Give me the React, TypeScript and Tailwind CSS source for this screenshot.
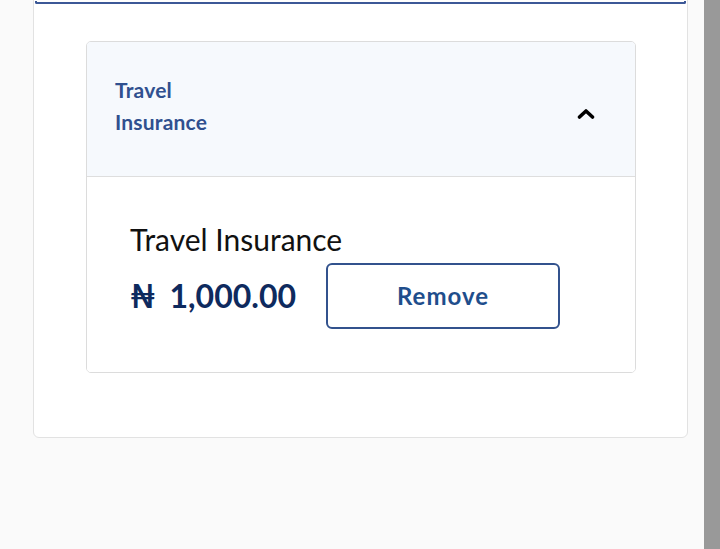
import React from "react";

export default function App() {
  return (
    <div
      className="flex w-[720px] h-[549px] overflow-hidden bg-[#fafafa]"
      style={{ fontFamily: "Lato, 'Noto Sans', sans-serif" }}
    >
      <div className="flex-1 relative">
        <div className="ml-[33px] w-[655px] -mt-[20px] h-[458px] bg-white border border-[#e2e2e2] rounded-b-[6px] flex flex-col">
          <div className="pt-[20px]">
            <div className="h-[3px] mx-px border-2 border-t-0 border-[#3c5897] rounded-b-[2px]" />
          </div>
          <div className="mt-[37px] ml-[52px] w-[550px] border border-[#dcdcdc] rounded-[5px] overflow-hidden">
            <div className="h-[135px] bg-[#f6f9fd] border-b border-[#dedede] flex items-center justify-between pl-[28px] pr-[40px]">
              <div className="w-[110px] mb-[6px] text-[21px] leading-[32px] font-bold tracking-[0.2px] text-[#30508f]">
                Travel Insurance
              </div>
              <svg width="18" height="11" viewBox="0 0 18 11" className="mt-[9px]">
                <polyline
                  points="2.5,9 9,3 15.5,9"
                  fill="none"
                  stroke="#000"
                  strokeWidth="3.6"
                  strokeLinecap="round"
                  strokeLinejoin="round"
                />
              </svg>
            </div>
            <div className="pl-[43px] pt-[44px] pb-[43px] bg-white">
              <div className="text-[30px] leading-[36px] text-[#111]">Travel Insurance</div>
              <div className="mt-[6px] flex items-center gap-[30px]">
                <div className="text-[32px] font-bold text-[#0e2a5e] leading-none flex items-baseline">
                  <span className="mr-[14px]">₦</span>
                  <span>1,000.00</span>
                </div>
                <button className="w-[234px] h-[66px] border-2 border-[#32528d] rounded-[6px] text-[24px] font-bold tracking-[1px] text-[#1f4e8c] bg-white">
                  Remove
                </button>
              </div>
            </div>
          </div>
        </div>
      </div>
      <div className="w-[16px] h-full bg-[#999999]" />
    </div>
  );
}
